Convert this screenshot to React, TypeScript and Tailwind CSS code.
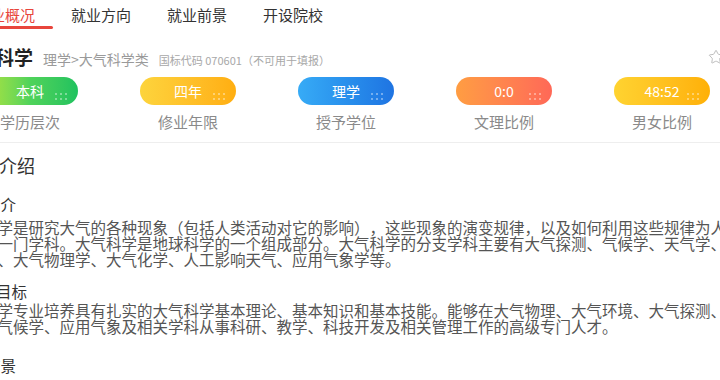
import { Star } from 'lucide-react';

const tabs = ['专业概况', '就业方向', '就业前景', '开设院校'];

const stats = [
  { value: '本科', label: '学历层次', pill: 'bg-gradient-to-r from-[#b0e43a] via-[#4fd35a] to-[#1ec25f]' },
  { value: '四年', label: '修业年限', pill: 'bg-gradient-to-r from-[#fdd43c] to-[#ffae10]' },
  { value: '理学', label: '授予学位', pill: 'bg-gradient-to-r from-[#37abf6] to-[#1f74e2]' },
  { value: '0:0', label: '文理比例', pill: 'bg-gradient-to-r from-[#ff9d42] to-[#ff6857]' },
  { value: '48:52', label: '男女比例', pill: 'bg-gradient-to-r from-[#ffd330] to-[#ffb005]' },
];

function Dots() {
  return (
    <div className="absolute right-[11px] bottom-[5px] grid grid-cols-3 gap-x-[3px] gap-y-[3px]">
      {Array.from({ length: 6 }).map((_, i) => (
        <span key={i} className="block w-[2px] h-[2px] rounded-full bg-white/50" />
      ))}
    </div>
  );
}

export default function App() {
  return (
    <div
      className="w-[720px] h-[380px] overflow-hidden bg-white [text-spacing-trim:space-all]"
      style={{ fontFamily: '"Noto Sans CJK SC", "Noto Sans", sans-serif' }}
    >
      <div className="-ml-[49px] w-[790px]">
        {/* tabs */}
        <div className="flex pl-[6px] h-[29px]">
          {tabs.map((t, i) => (
            <div key={t} className="flex flex-col">
              <div
                className={
                  'px-[18px] pt-[5px] text-[15px] leading-[20px] ' +
                  (i === 0 ? 'text-[#e8453c]' : 'text-[#333]')
                }
              >
                {t}
              </div>
              {i === 0 && <div className="mt-[1px] h-[3px] rounded-full bg-[#e8453c]" />}
            </div>
          ))}
        </div>

        {/* title row */}
        <div className="mt-[16px] flex items-center justify-between pl-[6px] pr-[17px] h-[24px]">
          <div className="flex items-baseline">
            <span className="text-[19px] leading-[24px] font-bold text-[#222]">大气科学</span>
            <span className="ml-[10px] text-[14px] text-[#9a9a9a]">理学&gt;大气科学类</span>
            <span className="ml-[10px] text-[11px] text-[#a8a8a8]">国标代码 070601（不可用于填报）</span>
          </div>
          <Star size={16} strokeWidth={1.4} className="text-[#b8b8b8] -mt-[1px]" />
        </div>

        {/* stats */}
        <div className="mt-[8px] flex">
          {stats.map((s) => (
            <div key={s.label} className="w-[164px] flex flex-col items-center">
              <div
                className={
                  'relative w-[96px] h-[28px] rounded-full flex items-center justify-center text-white text-[14px] ' +
                  s.pill
                }
              >
                {s.value}
                <Dots />
              </div>
              <div className="mt-[7px] text-[15px] leading-[20px] text-[#8a8a8a]">{s.label}</div>
            </div>
          ))}
        </div>

        <div className="mt-[10px] h-px bg-[#eeeeee]" />

        {/* intro */}
        <div className="mt-[10px] pl-[12px] text-[18px] leading-[24px] text-[#333]">专业介绍</div>

        <div className="mt-[17px] pl-[3px] text-[15.5px] leading-[20px] text-[#333]">专业简介</div>
        <p className="mt-[5px] text-[15.5px] leading-[16px] text-[#555] whitespace-nowrap">
          大气科学是研究大气的各种现象（包括人类活动对它的影响），这些现象的演变规律，以及如何利用这些规律为人类
          <br />
          服务的一门学科。大气科学是地球科学的一个组成部分。大气科学的分支学科主要有大气探测、气候学、天气学、动力
          <br />
          气象学、大气物理学、大气化学、人工影响天气、应用气象学等。
        </p>

        <div className="mt-[14px] pl-[14px] text-[15.5px] leading-[20px] text-[#333]">培养目标</div>
        <p className="mt-[1px] text-[15.5px] leading-[16px] text-[#555] whitespace-nowrap">
          大气科学专业培养具有扎实的大气科学基本理论、基本知识和基本技能。能够在大气物理、大气环境、大气探测、
          <br />
          天气、气候学、应用气象及相关学科从事科研、教学、科技开发及相关管理工作的高级专门人才。
        </p>

        <div className="mt-[21px] pl-[3px] text-[15.5px] leading-[20px] text-[#333]">就业前景</div>
      </div>
    </div>
  );
}
